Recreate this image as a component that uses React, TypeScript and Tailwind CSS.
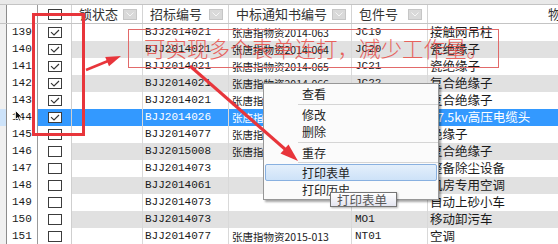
import React from 'react'

type Row = { n: number; c: boolean; a: string; b: string; p: string; name: string; sel?: boolean }

// 物资招标列表：勾选 + 右键菜单（打印表单）
const rows: Row[] = [
  { n: 139, c: true, a: 'BJJ2014021', b: '张唐指物资2014-063', p: 'JC19', name: '接触网吊柱' },
  { n: 140, c: true, a: 'BJJ2014021', b: '张唐指物资2014-064', p: 'JC20', name: '瓷绝缘子' },
  { n: 141, c: true, a: 'BJJ2014021', b: '张唐指物资2014-065', p: 'JC21', name: '瓷绝缘子' },
  { n: 142, c: true, a: 'BJJ2014021', b: '张唐指物资2014-066', p: 'JC22', name: '复合绝缘子' },
  { n: 143, c: true, a: 'BJJ2014021', b: '张唐指物资2014-067', p: 'JC23', name: '复合绝缘子' },
  { n: 144, c: true, a: 'BJJ2014026', b: '张唐指物资2014-071', p: 'JC01', name: '27.5kv高压电缆头', sel: true },
  { n: 145, c: false, a: 'BJJ2014077', b: '张唐指物资2014-080', p: '', name: '绝缘子' },
  { n: 146, c: false, a: 'BJJ2015008', b: '张唐指物资2015-002', p: '', name: '复合绝缘子' },
  { n: 147, c: false, a: 'BJJ2014073', b: '', p: '', name: '整备除尘设备' },
  { n: 148, c: false, a: 'BJJ2014061', b: '', p: '', name: '机房专用空调' },
  { n: 149, c: false, a: 'BJJ2014073', b: '', p: '', name: '自动上砂小车' },
  { n: 150, c: false, a: 'BJJ2014073', b: '', p: 'MO1', name: '移动卸污车' },
  { n: 151, c: false, a: 'BJJ2014077', b: '张唐指物资2015-013', p: 'NT01', name: '空调' },
]

const mono = "font-['Liberation_Mono','Noto_Sans_CJK_SC',monospace] text-[11px]"

function Check({ on }: { on: boolean }) {
  return (
    <span className="flex h-[11px] w-[14px] items-center justify-center border border-[#3c3c3c] bg-white">
      {on && (
        <svg width="10" height="7" viewBox="0 0 10 7">
          <path d="M1 3.2 L4 6 L9 1" fill="none" stroke="#333" strokeWidth="1.1" />
        </svg>
      )}
    </span>
  )
}

function Drop() {
  return (
    <span className="flex h-[11px] w-[14px] shrink-0 items-center justify-center border border-[#c6c6c6] bg-[#d9d9d9]">
      <svg width="8" height="5" viewBox="0 0 8 5">
        <path d="M0.5 0.5 L4 4 L7.5 0.5" fill="none" stroke="#f5f5f5" strokeWidth="1" />
      </svg>
    </span>
  )
}

function HeadCell({ w, label }: { w: string; label: string }) {
  return (
    <div className={`${w} flex items-center justify-between border-r border-[#d4d4d4] pl-[7px] pr-[5px]`}>
      <span>{label}</span>
      <Drop />
    </div>
  )
}

export default function App() {
  return (
    <div className="relative h-[244px] w-[558px] overflow-hidden bg-white font-['Noto_Sans_CJK_SC',sans-serif] text-[#1a1a1a]">
      <div className="h-[4px] bg-[#e9e9e9]" />
      <div className="flex h-[20px] border-y border-[#c4c4c4] bg-white text-[13px] text-[#333]">
        <div className="w-[7px] border-r border-[#8c8c8c] bg-[#ededed]" />
        <div className="w-[31px] border-r border-[#9a9a9a]" />
        <div className="flex w-[34px] items-center justify-center border-r border-[#d4d4d4]">
          <Check on={false} />
        </div>
        <HeadCell w="w-[71px]" label="锁状态" />
        <HeadCell w="w-[86px]" label="招标编号" />
        <HeadCell w="w-[123px]" label="中标通知书编号" />
        <HeadCell w="w-[76px]" label="包件号" />
        <div className="flex min-w-0 flex-1 items-center overflow-hidden whitespace-nowrap pl-[120px]">物资名称</div>
      </div>

      {rows.map((r, i) => {
        const bg = r.sel ? 'bg-[#3399ff] text-white' : i % 2 ? 'bg-[#e1e1e1]' : 'bg-white'
        return (
          <div key={r.n} className="flex h-[17px] items-center">
            <div className={`h-full w-[7px] border-r border-[#8c8c8c] ${r.sel ? 'bg-[#cde3fa]' : 'bg-[#f0f0f0]'}`} />
            <div className={`flex h-full w-[31px] items-center border-r border-[#9a9a9a] bg-white pl-[5px] ${mono} text-[10.5px]`}>
              {r.n}
            </div>
            <div className={`flex h-full w-[34px] items-center justify-center border-r border-[#cfcfcf] ${r.sel ? 'bg-[#3399ff]' : 'bg-white'}`}>
              <Check on={r.c} />
            </div>
            <div className={`flex h-full flex-1 items-center ${bg}`}>
              <div className="h-full w-[71px] border-r border-[#d9d9d9]" />
              <div className={`flex h-full w-[86px] items-center border-r border-[#d9d9d9] pl-[2px] ${mono}`}>{r.a}</div>
              <div className="flex h-full w-[123px] items-center border-r border-[#d9d9d9] pl-[3px] text-[10.5px]">{r.b}</div>
              <div className={`flex h-full w-[76px] items-center border-r border-[#d9d9d9] pl-[3px] ${mono}`}>{r.p}</div>
              <div className="flex h-full flex-1 items-center whitespace-nowrap pl-[2px] text-[12.5px]">{r.name}</div>
            </div>
          </div>
        )
      })}

      {/* 鼠标 */}
      <svg className="absolute left-[15px] top-[110px]" width="8" height="12" viewBox="0 0 8 12">
        <path d="M0.5 0.5 L0.5 9.5 L2.7 7.5 L4.3 11 L5.6 10.4 L4.1 7 L7 7 Z" fill="#111" stroke="#fff" strokeWidth="0.8" />
      </svg>

      {/* 红框 */}
      <div className="absolute left-[32px] top-[13px] h-[123px] w-[53px] border-[3px] border-[#e8353b]" />
      <div className="absolute left-[128px] top-[29px] h-[39px] w-[371px] border border-[#e26a6a]" />
      <div className="absolute left-[144px] top-[37px] whitespace-nowrap text-[21.5px] font-light leading-none text-[#e8433c] opacity-80">
        可实现多个表单连打，减少工作量。
      </div>

      {/* 右键菜单 */}
      <div className="absolute left-[263px] top-[83px] flex w-[176px] flex-col border border-[#979797] bg-[#fbfbfb] py-[1px] text-[12px] text-[#1e1e1e] shadow-[2px_2px_2px_rgba(0,0,0,0.35)]">
        <div className="h-[17px] pl-[38px] leading-[17px]">查看</div>
        <div className="ml-[34px] flex h-[4px] items-center"><div className="w-full border-t border-[#d5d5d5]" /></div>
        <div className="h-[17px] pl-[38px] leading-[17px]">修改</div>
        <div className="h-[17px] pl-[38px] leading-[17px]">删除</div>
        <div className="ml-[34px] flex h-[4px] items-center"><div className="w-full border-t border-[#d5d5d5]" /></div>
        <div className="h-[17px] pl-[38px] leading-[17px]">重存</div>
        <div className="ml-[34px] flex h-[3px] items-center"><div className="w-full border-t border-[#d5d5d5]" /></div>
        <div className="mx-[1px] h-[17px] rounded-[2px] border border-[#88b0e0] bg-gradient-to-b from-[#e4effb] to-[#cde2f8] pl-[36px] leading-[15px]">
          打印表单
        </div>
        <div className="h-[17px] pl-[38px] leading-[17px]">打印历史</div>
      </div>

      {/* 提示 */}
      <div className="absolute left-[330px] top-[192px] h-[15px] w-[67px] border border-[#767676] bg-gradient-to-b from-white to-[#e4e5f0] pl-[6px] text-[12.5px] leading-[13px] text-[#575757] shadow-[1px_1px_2px_rgba(0,0,0,0.3)]">
        打印表单
      </div>

      {/* 箭头 */}
      <svg className="pointer-events-none absolute left-0 top-0" width="558" height="244" viewBox="0 0 558 244">
        <line x1="86" y1="70" x2="108" y2="61" stroke="#e8353b" strokeWidth="2.5" />
        <polygon points="121,56 109,66.2 105.2,57" fill="#e8353b" />
        <line x1="190" y1="66" x2="286" y2="150" stroke="#e8353b" strokeWidth="3" />
        <polygon points="298,161 280.5,153.6 288.5,144.6" fill="#e8353b" />
      </svg>
    </div>
  )
}
